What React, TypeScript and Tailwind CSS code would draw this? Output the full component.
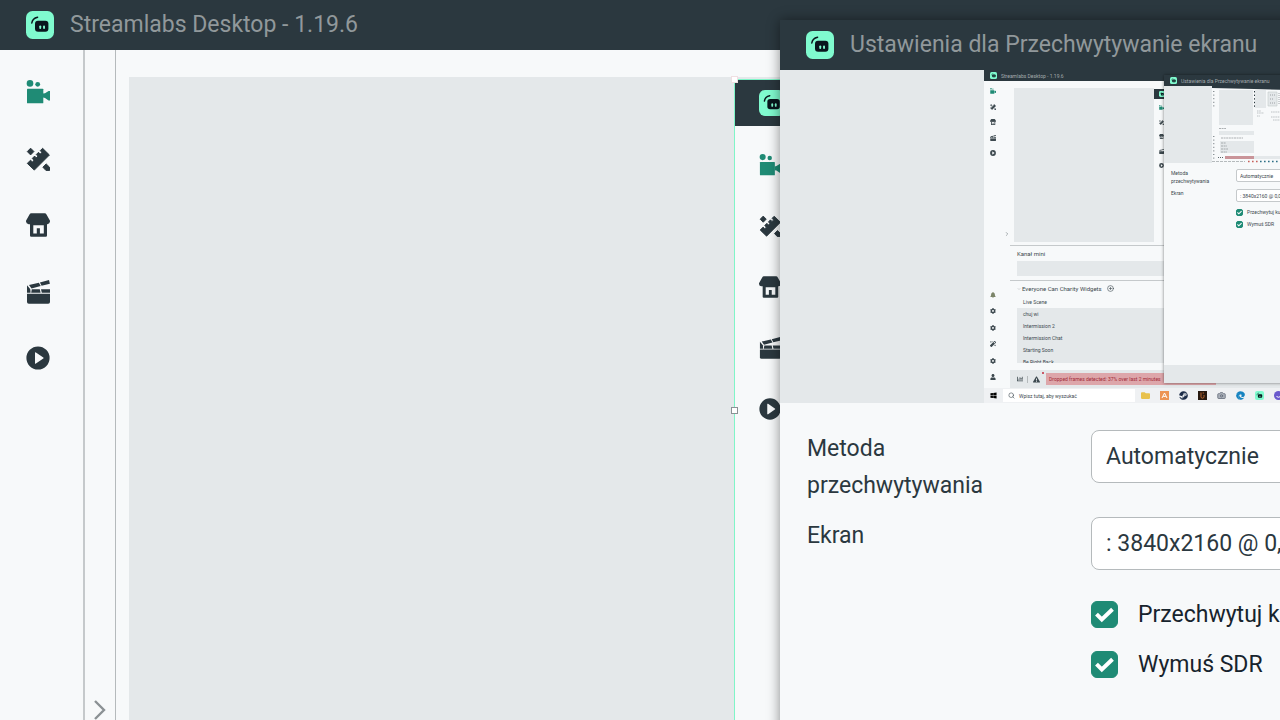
import React, { useState } from "react"
import { Camera, ChevronDown, ChevronRight, CirclePlus, Search } from "lucide-react"
import { FaBell, FaChartBar, FaCog, FaEdge, FaExclamationTriangle, FaFolder, FaMagic, FaSteam, FaUser, FaWindows } from "react-icons/fa"
import clsx from "clsx"

const SCENES = ["chuj wi", "Intermission 2", "Intermission Chat", "Starting Soon", "Be Right Back"]

const NAV = [
  { name: "Edytor", Icon: CameraIcon, active: true },
  { name: "Motywy", Icon: DesignIcon },
  { name: "Sklep", Icon: StoreIcon },
  { name: "Highlighter", Icon: ClapperIcon },
  { name: "Nagrania", Icon: PlayIcon },
]

export default function App() {
  return (
    <div className="relative flex h-screen flex-col overflow-hidden bg-[#f7f9fa] font-[Roboto,sans-serif] text-[#2b383f]">
      <TitleBar title="Streamlabs Desktop - 1.19.6" />

      <div className="flex min-h-0 flex-1">
        <nav className="w-[85px] shrink-0 border-r-2 border-[#c5c9cb] pl-[26px] pt-[30px]">
          <div className="flex h-[290px] flex-col justify-between">
            {NAV.map(({ name, Icon, active }) => (
              <button key={name} aria-label={name} className={clsx("w-6", active && "text-[#1f8b75]")}>
                <Icon className="size-6" />
              </button>
            ))}
          </div>
        </nav>

        <div className="flex w-[31px] shrink-0 items-end justify-center border-r border-[#b5babc]">
          <button aria-label="Rozwiń" className="text-[#8b9194]">
            <svg viewBox="0 0 20 20" className="size-5" fill="none" stroke="currentColor" strokeWidth="2.4">
              <path d="M5 1l9 9-9 9" />
            </svg>
          </button>
        </div>

        <main className="min-w-0 flex-1 pl-[13px] pt-[27px]">
          <div className="relative h-full bg-[#e4e8ea]">
            <CapturedSource />
          </div>
        </main>
      </div>

      <SourceSettings />
    </div>
  )
}

function TitleBar({ title }: { title: string }) {
  return (
    <header className="flex h-[50px] shrink-0 items-center gap-4 bg-[#2b383f] px-[26px]">
      <Logo className="size-7 shrink-0" />
      <h1 className="whitespace-nowrap text-[23px] text-[#91989b]">{title}</h1>
    </header>
  )
}

// Selected source lying on the editor canvas
function CapturedSource() {
  return (
    <div className="absolute bottom-0 left-[605px] right-0 top-[2px] border-l border-t border-[#80f5c8] bg-[#f7f9fa]">
      <div className="flex h-[46px] items-center bg-[#2b383f] pl-[24px]">
        <Logo className="size-[26px] shrink-0" />
      </div>
      <div className="mt-[28px] flex h-[266px] flex-col justify-between pl-[24px]">
        {NAV.map(({ name, Icon, active }) => (
          <Icon key={name} className={clsx("size-[22px]", active && "text-[#1f8b75]")} />
        ))}
      </div>
      <span className="absolute -left-1 -top-1 size-[7px] border border-[#f0dfe2] bg-white" />
      <span className="absolute -left-1 top-[327px] size-[7px] border border-[#8b9194] bg-white" />
    </div>
  )
}

function SourceSettings() {
  const [method, setMethod] = useState("auto")
  const [screen, setScreen] = useState("0")

  return (
    <section className="absolute left-[780px] top-5 flex h-screen w-[1000px] flex-col bg-[#f7f9fa] shadow-[0_0_12px_rgba(0,0,0,0.45)]">
      <TitleBar title="Ustawienia dla Przechwytywanie ekranu" />

      <div className="flex h-[333px] shrink-0 bg-[#e4e8ea] pl-[204px]">
        <ScreenPreview />
      </div>

      <form className="flex flex-col gap-[13px] px-[27px] pt-[27px] text-[23px] leading-[37px]">
        <div className="flex">
          <label htmlFor="method" className="w-[284px] shrink-0 pr-16">Metoda przechwytywania</label>
          <select
            id="method"
            value={method}
            onChange={(e) => setMethod(e.target.value)}
            className="h-[53px] flex-1 appearance-none rounded-lg border border-[#b5babc] bg-white px-[14px]"
          >
            <option value="auto">Automatycznie</option>
          </select>
        </div>
        <div className="flex">
          <label htmlFor="screen" className="w-[284px] shrink-0">Ekran</label>
          <select
            id="screen"
            value={screen}
            onChange={(e) => setScreen(e.target.value)}
            className="h-[53px] flex-1 appearance-none rounded-lg border border-[#b5babc] bg-white px-[14px]"
          >
            <option value="0">: 3840x2160 @ 0,0</option>
          </select>
        </div>
        <div className="flex flex-col gap-[13px] pl-[284px] pt-[13px] text-[#17242d]">
          <Check label="Przechwytuj kursor" />
          <Check label="Wymuś SDR" />
        </div>
      </form>
    </section>
  )
}

function Check({ label, small }: { label: string; small?: boolean }) {
  const [checked, setChecked] = useState(true)
  return (
    <label className={clsx("flex items-center whitespace-nowrap", small ? "gap-1" : "gap-5")}>
      <span className="grid shrink-0">
        <input
          type="checkbox"
          checked={checked}
          tabIndex={small ? -1 : 0}
          onChange={(e) => setChecked(e.target.checked)}
          className={clsx(
            "col-start-1 row-start-1 appearance-none border border-[#1f8b75] checked:bg-[#1f8b75]",
            small ? "size-[7px] rounded-[2px]" : "size-[27px] rounded-md"
          )}
        />
        {checked && (
          <svg viewBox="0 0 27 27" className={clsx("pointer-events-none col-start-1 row-start-1", small ? "size-[7px]" : "size-[27px]")} fill="none" stroke="#fff" strokeWidth="4">
            <path d="M5.5 13.2l5.3 5.3L21.5 8.3" />
          </svg>
        )}
      </span>
      {label}
    </label>
  )
}

// Live thumbnail of the captured display
function ScreenPreview() {
  return (
    <div className="relative flex min-w-0 flex-1 flex-col overflow-hidden bg-[#f7f9fa] text-[5px] leading-[12px] text-[#3d494f]">
      <SmallTitleBar title="Streamlabs Desktop - 1.19.6" />

      <div className="flex min-h-0 flex-1">
        <div className="flex w-5 shrink-0 flex-col pb-[8px] pl-[6px] pt-[7px]">
          <div className="flex h-[68px] flex-col justify-between">
            {NAV.map(({ name, Icon, active }) => (
              <Icon key={name} className={clsx("size-[6px]", active && "text-[#1f8b75]")} />
            ))}
          </div>
          <div className="mt-auto flex h-[88px] flex-col justify-between">
            <FaBell className="size-[6px] text-[#7c8569]" />
            <FaCog className="size-[6px]" />
            <FaCog className="size-[6px]" />
            <FaMagic className="size-[6px]" />
            <FaCog className="size-[6px]" />
            <FaUser className="size-[6px]" />
          </div>
        </div>
        <div className="flex w-[6px] shrink-0 flex-col pt-[150px]">
          <ChevronRight className="size-[6px] text-[#5c666b]" />
        </div>

        <div className="flex min-w-0 flex-1 flex-col">
          <div className="ml-1 mt-[7px] flex h-[154px] shrink-0">
            <div className="w-[140px] bg-[#e4e8ea]" />
            <div className="flex-1 pt-px">
              <div className="flex h-[10px] items-center bg-[#2b383f] pl-[5px]">
                <Logo className="size-[6px]" />
              </div>
              <div className="mt-[6px] flex h-[63px] flex-col justify-between pl-[5px]">
                {NAV.map(({ name, Icon, active }) => (
                  <Icon key={name} className={clsx("size-[5px]", active && "text-[#1f8b75]")} />
                ))}
              </div>
            </div>
          </div>

          <div className="mt-[3px] border-t border-[#c5c9cb] pb-1 pl-[7px]">
            <p className="text-[6px] leading-[15px]">Kanał mini</p>
            <div className="h-[15px] bg-[#e4e8ea]" />
          </div>

          <div className="border-t border-[#c5c9cb] pl-[7px]">
            <p className="flex h-[15px] items-center gap-px text-[6px]">
              <ChevronDown className="size-1 text-[#91989b]" />
              <span className="whitespace-nowrap">Everyone Can Charity Widgets</span>
              <CirclePlus className="ml-1 size-[7px]" />
            </p>
            <p className="pl-[6px]">Live Scene</p>
            <ul className="h-[55px] overflow-hidden bg-[#e4e8ea] pl-[6px]">
              {SCENES.map((scene) => (
                <li key={scene}>{scene}</li>
              ))}
            </ul>
          </div>

          <div className="mt-auto flex h-[18px] items-center bg-[#e4e8ea] pl-[7px]">
            <FaChartBar className="size-[6px]" />
            <span className="ml-1 h-[7px] border-l border-[#b5babc]" />
            <span className="relative ml-[5px]">
              <FaExclamationTriangle className="size-[7px]" />
              <span className="absolute -right-1 -top-1 size-[2px] rounded-full bg-[#c22b3c]" />
            </span>
            <p className="ml-[6px] w-[170px] whitespace-nowrap bg-[#dda6aa] pl-[3px] text-[#a32b38]">
              Dropped frames detected: 37% over last 2 minutes
            </p>
          </div>
        </div>
      </div>

      <Taskbar />
      <SmallSettings />
    </div>
  )
}

function SmallTitleBar({ title }: { title: string }) {
  return (
    <div className="flex h-[11px] shrink-0 items-center gap-1 bg-[#2b383f] pl-[6px] text-[#a4abae]">
      <Logo className="size-[7px] shrink-0" />
      <span className="whitespace-nowrap">{title}</span>
    </div>
  )
}

function SmallSettings() {
  return (
    <div className="absolute left-[180px] top-[5px] flex h-[308px] w-[400px] flex-col bg-[#f7f9fa] shadow-[0_0_3px_rgba(0,0,0,0.5)]">
      <SmallTitleBar title="Ustawienia dla Przechwytywanie ekranu" />
      <div className="flex h-[77px] shrink-0 bg-[#e4e8ea] pl-[48px]">
        <TinyScreen />
      </div>
      <div className="flex flex-col gap-1 pl-[7px] pt-[6px] leading-[8px]">
        <div className="flex">
          <label htmlFor="method-preview" className="w-[65px] shrink-0 pr-4">Metoda przechwytywania</label>
          <select id="method-preview" tabIndex={-1} className="h-[13px] flex-1 appearance-none rounded-[2px] border border-[#c5c9cb] bg-white px-[3px]">
            <option>Automatycznie</option>
          </select>
        </div>
        <div className="flex">
          <label htmlFor="screen-preview" className="w-[65px] shrink-0">Ekran</label>
          <select id="screen-preview" tabIndex={-1} className="h-[13px] flex-1 appearance-none rounded-[2px] border border-[#c5c9cb] bg-white px-[3px]">
            <option>: 3840x2160 @ 0,0</option>
          </select>
        </div>
        <div className="flex flex-col gap-1 pl-[65px] pt-[2px]">
          <Check small label="Przechwytuj kursor" />
          <Check small label="Wymuś SDR" />
        </div>
      </div>
      <div className="mt-auto h-[18px] bg-[#e4e8ea]" />
    </div>
  )
}

function Taskbar() {
  return (
    <div className="flex h-[15px] shrink-0 items-center bg-[#eff1f3] pl-[6px]">
      <FaWindows className="size-[7px] shrink-0 text-black" />
      <div className="ml-[6px] flex h-[13px] w-[132px] shrink-0 items-center gap-1 bg-white pl-[5px]">
        <Search className="size-[7px]" />
        <span>Wpisz tutaj, aby wyszukać</span>
      </div>
      <div className="flex shrink-0 items-center gap-[10px] pl-[6px]">
        <FaFolder className="size-[9px] text-[#e8c14d]" />
        <svg viewBox="0 0 9 9" className="size-[9px]">
          <rect width="9" height="9" fill="#ec9454" />
          <path d="M2 7l2.5-5L7 7M3.2 5.4h2.6" stroke="#fff" fill="none" />
        </svg>
        <FaSteam className="size-[9px] text-[#1c2c48]" />
        <svg viewBox="0 0 9 9" className="size-[9px]">
          <rect width="9" height="9" fill="#27190f" />
          <path d="M3 1.5v4.2q0 1.5 1.5 1.5T6 5.7V4M6 2H4.6" stroke="#b9652f" fill="none" />
        </svg>
        <Camera className="size-[9px] fill-[#a9afb8] text-[#5d6674]" />
        <FaEdge className="size-[9px] text-[#1683c0]" />
        <Logo className="size-[9px]" />
        <svg viewBox="0 0 9 9" className="size-[9px]">
          <circle cx="4.5" cy="4.5" r="4.5" fill="#6a5acd" />
          <path d="M2.5 5.5q2 1.5 4 0" stroke="#fff" fill="none" />
        </svg>
      </div>
    </div>
  )
}

// Second level of the capture, too small for anything but shapes
function TinyScreen() {
  return (
    <svg viewBox="0 0 120 77" width="120" height="77" className="shrink-0">
      <rect width="120" height="77" fill="#f7f9fa" />
      <path d="M0 0h120v5L42 3 0 2z" fill="#2b383f" />
      <path d="M1.8 5v16M1.8 50v26" stroke="#5c666b" strokeWidth="1" strokeDasharray="1 2.6" />
      <path d="M7 4h34v35H7zM7 45h35v4H7zM8 55h34v12H8zM43 4h11v18H43z" fill="#e4e8ea" />
      <path d="M42.5 5v16" stroke="#2b383f" strokeDasharray="1.4 2.2" />
      <path d="M7 42.5h7M9 52h22M9 57h5M9 60h6M9 63h7M9 66h6" stroke="#8b9194" strokeWidth=".7" strokeDasharray="2 .6" />
      <path d="M6 71.5h5" stroke="#5c666b" strokeDasharray="1 1" />
      <path d="M13 70h29v3H13z" fill="#c99499" />
      <path d="M42 70h78v3H42z" fill="#e4e8ea" />
      <path d="M0 75.5h33" stroke="#b5babc" strokeDasharray="3 1" />
      <path d="M36 75.5h12" stroke="#c75f5a" strokeWidth="1.6" strokeDasharray="1.6 2.4" />
      <path d="M48 75.5h40" stroke="#2d6f86" strokeWidth="1.6" strokeDasharray="1.6 2.4" />
      <path d="M45 25h4M45 27h7M45 30h3M59 26h12M59 31h12M61 34h10" stroke="#a4abae" strokeWidth=".7" strokeDasharray="1.5 .7" />
      <path d="M56 6h9v14h-9z" fill="#e4e8ea" stroke="#c5c9cb" strokeWidth=".6" />
      <path d="M58 9h5M58 13h4M58 17h5M67 7v12" stroke="#8b9194" strokeWidth=".8" strokeDasharray="1 1" />
    </svg>
  )
}

type IconProps = { className?: string }

function Logo({ className }: IconProps) {
  return (
    <svg viewBox="0 0 28 28" className={className}>
      <rect width="28" height="28" rx="6.5" fill="#80fbcf" />
      <path d="M5.8 12Q6.5 7.2 11.6 6.2" fill="none" stroke="#09161d" strokeWidth="1.5" strokeLinecap="round" />
      <rect x="9" y="9.8" width="13.4" height="11" rx="3" fill="#09161d" />
      <rect x="13.3" y="14.4" width="1.9" height="3.6" rx=".9" fill="#80fbcf" />
      <rect x="17.1" y="14.4" width="1.9" height="3.6" rx=".9" fill="#80fbcf" />
    </svg>
  )
}

function CameraIcon({ className }: IconProps) {
  return (
    <svg viewBox="0 0 24 24" className={className} fill="currentColor">
      <circle cx="4" cy="3.4" r="3.3" />
      <circle cx="11.7" cy="4.3" r="2.4" />
      <rect x="1" y="8.7" width="16.3" height="14.6" rx=".6" />
      <path d="M17 13.6l2-.4L22.600 11H24v9.400h-1.400L19 18l-2-.4z" />
    </svg>
  )
}

function DesignIcon({ className }: IconProps) {
  return (
    <svg viewBox="0 0 24 24" className={className} fill="currentColor" stroke="currentColor" strokeWidth="1" strokeLinejoin="round">
      <path d="M1.300 16.400L4.500 13.200l1.800 1.700 1.700-1.600-1.700-1.900 2.300-2.300 1.600 1.700 1.700-1.600-1.600-1.700 2.200-2.200 1.700 1.700 1.700-1.600-1.600-1.800L16.600 1.300 23.400 8 8.300 23.100z" />
      <path d="M4.600 1.200l3.300 3.300-3.300 3.400L1.300 4.600z" />
      <path d="M20.200 16.900l3.300 3.300v3.400h-3.400l-3.200-3.400z" />
    </svg>
  )
}

function StoreIcon({ className }: IconProps) {
  return (
    <svg viewBox="0 0 24 24" className={className} fill="currentColor">
      <path d="M5.4.3h13.2q1.3 0 1.9 1.200L24 7.800q.2 3.200-2.600 3.400H2.600Q-.2 11 0 7.800l3.500-6.300Q4.100.3 5.400.3z" />
      <path fillRule="evenodd" d="M4 10h17v12.600q0 1.200-1.200 1.200H5.200Q4 23.800 4 22.600zM7.300 12.200v8.300h3.500v-5.300h3.100v5.300h3.900v-8.300z" />
    </svg>
  )
}

function ClapperIcon({ className }: IconProps) {
  return (
    <svg viewBox="0 0 24 24" className={className} fill="currentColor">
      <path d="M1 13.700h23V22q0 1.800-1.800 1.800H2.800Q1 23.800 1 22z" />
      <path d="M1 5.300L4.200 8.900 4.600 12.800H1z" />
      <path d="M5.800 9.300h8l.8 3.500H5.200zM15 9.300h9v3.500h-8.200z" />
      <path d="M3 5l9.900-2.300 1.800 3.300-9.200 2.500zM13.900 2.400L23 .1l.9 3.600-8.300 2.100z" />
    </svg>
  )
}

function PlayIcon({ className }: IconProps) {
  return (
    <svg viewBox="0 0 24 24" className={className} fill="currentColor">
      <path fillRule="evenodd" d="M12 .4a11.600 11.600 0 1 0 0 23.200 11.600 11.600 0 0 0 0-23.200zM9 6.800q0-1 .9-.4l7.400 5q.8.600 0 1.200l-7.400 5q-.9.600-.9-.4z" />
    </svg>
  )
}
